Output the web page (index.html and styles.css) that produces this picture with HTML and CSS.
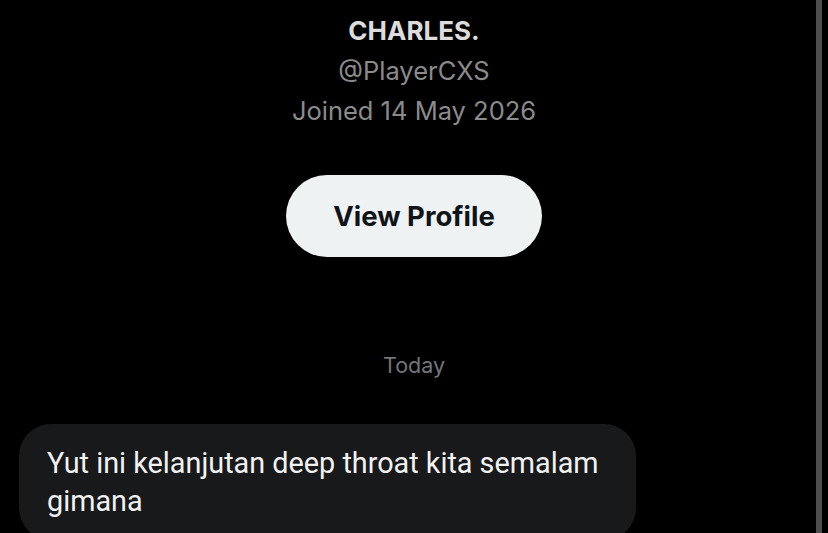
FILE: index.html
```html
<!DOCTYPE html>
<html lang="en">
<head>
    <meta charset="UTF-8">
    <meta name="viewport" content="width=device-width, initial-scale=1.0">
    <title>Messages</title>
    <link rel="stylesheet" href="styles.css">
</head>
<body>
    <div class="chat">
        <div class="profile">
            <div class="name">CHARLES.</div>
            <div class="handle">@PlayerCXS</div>
            <div class="joined">Joined 14 May 2026</div>
            <button class="view-btn">View Profile</button>
        </div>

        <div class="day">Today</div>

        <div class="msg-row">
            <div class="bubble">Yut ini kelanjutan deep throat kita semalam gimana</div>
        </div>

        <div class="scroll-line"></div>
    </div>
</body>
</html>
```

FILE: styles.css
```css
body {
    margin: 0;
    background: #000;
    font-family: Roboto, "Noto Sans", sans-serif;
    color: #e7e9ea;
    overflow: hidden;
}
.chat {
    position: relative;
    width: 828px;
    height: 533px;
    overflow: hidden;
}
.profile {
    display: flex;
    flex-direction: column;
    align-items: center;
    padding-top: 11px;
}
.name {
    font-family: Inter, sans-serif;
    font-size: 26px;
    font-weight: 700;
    line-height: 40px;
    color: #dcdcdc;
}
.handle, .joined {
    font-family: Inter, sans-serif;
    font-size: 25.5px;
    line-height: 40px;
    color: #8b8b8b;
}
.view-btn {
    margin-top: 44px;
    width: 256px;
    height: 82px;
    border: none;
    border-radius: 41px;
    background: #eff2f3;
    color: #0f1419;
    font-family: Inter, sans-serif;
    font-size: 27.5px;
    font-weight: 700;
    cursor: pointer;
}
.day {
    text-align: center;
    margin-top: 95px;
    font-family: Inter, sans-serif;
    font-size: 21.5px;
    color: #71767b;
}
.msg-row {
    padding: 46px 0 0 19px;
}
.bubble {
    width: 617px;
    box-sizing: border-box;
    padding: 20px 28px;
    background: #17191b;
    border-radius: 32px;
    font-size: 28.8px;
    line-height: 38px;
    color: #f2f2f2;
}
.scroll-line {
    position: absolute;
    top: 0;
    right: 6px;
    width: 6px;
    height: 100%;
    background: #4d4d4d;
}
```
